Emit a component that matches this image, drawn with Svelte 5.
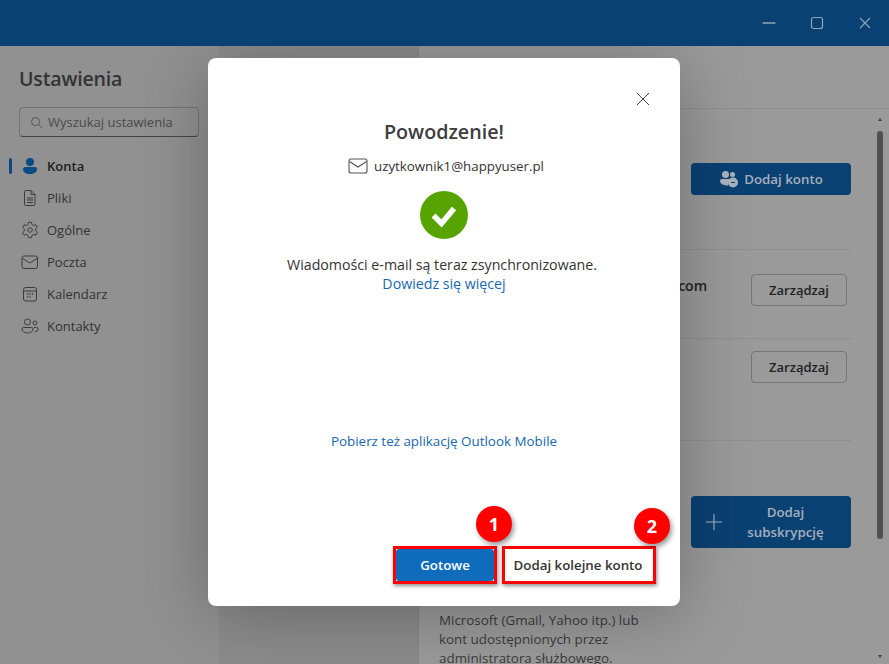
<script lang="ts">
  const navItems = [
    { id: 'konta', label: 'Konta', active: true },
    { id: 'pliki', label: 'Pliki' },
    { id: 'ogolne', label: 'Ogólne' },
    { id: 'poczta', label: 'Poczta' },
    { id: 'kalendarz', label: 'Kalendarz' },
    { id: 'kontakty', label: 'Kontakty' }
  ];
</script>

<div class="window">
  <header class="titlebar">
    <svg width="14" height="2" viewBox="0 0 14 2"><path d="M1 1h12" stroke="#8fa5b9" stroke-width="1.4" stroke-linecap="round" /></svg>
    <svg width="14" height="14" viewBox="0 0 14 14"><rect x="1.5" y="1.5" width="11" height="11" rx="2" fill="none" stroke="#8fa5b9" stroke-width="1.2" /></svg>
    <svg width="14" height="14" viewBox="0 0 14 14"><path d="M2 2l10 10M12 2L2 12" stroke="#8fa5b9" stroke-width="1.1" /></svg>
  </header>

  <div class="body">
    <aside class="sidebar">
      <h1>Ustawienia</h1>
      <div class="search">
        <svg width="13" height="13" viewBox="0 0 13 13" fill="none" stroke="#555" stroke-width="1"><circle cx="5.5" cy="5.5" r="4" /><path d="M8.5 8.5l3.5 3.5" /></svg>
        <span>Wyszukaj ustawienia</span>
      </div>
      <nav>
        {#each navItems as item}
          <div class="nav-item" class:active={item.active}>
            <svg class="nav-icon" width="18" height="18" viewBox="0 0 18 18" fill="none" stroke="#3c3c3c" stroke-width="1">
              {#if item.id === 'konta'}
                <circle cx="9" cy="5" r="4" fill="#0a4a85" stroke="none" />
                <path d="M2 12a2.2 2.2 0 0 1 2.2-2h9.6a2.2 2.2 0 0 1 2.2 2c0 3.4-3 5-7 5s-7-1.6-7-5z" fill="#0a4a85" stroke="none" />
              {:else if item.id === 'pliki'}
                <path d="M4.5 1.5h5.5l4 4v10a1 1 0 0 1-1 1H4.500a1 1 0 0 1-1-1v-13a1 1 0 0 1 1-1z" />
                <path d="M10 1.500v4h4M6 9h6M6 11h6M6 13.500h6" />
              {:else if item.id === 'ogolne'}
                <circle cx="9" cy="9" r="2.300" />
                <path d="M7.500 1.300h3l.5 2.300 1.600.9 2.200-.7 1.500 2.600-1.700 1.600v1.900l1.700 1.600-1.500 2.600-2.200-.7-1.600.9-.5 2.300h-3l-.5-2.300-1.600-.9-2.200.7-1.500-2.600 1.700-1.600V8l-1.700-1.600 1.500-2.600 2.200.7 1.600-.9z" />
              {:else if item.id === 'poczta'}
                <rect x="1" y="3" width="15.500" height="12.500" rx="2" />
                <path d="M1.500 5.500l7.250 4.500 7.250-4.500" />
              {:else if item.id === 'kalendarz'}
                <rect x="2.500" y="2.500" width="13" height="13.500" rx="2" />
                <path d="M2.500 6h13" />
                <path d="M6 9h1.200M8.500 9h1.200M11 9h1.200M6 11.800h1.200M8.500 11.800h1.200" stroke-width="1.300" />
              {:else}
                <circle cx="6.500" cy="5" r="3" />
                <circle cx="14" cy="6" r="2" />
                <path d="M1 12a1.500 1.500 0 0 1 1.500-1.500h8a1.500 1.500 0 0 1 1.500 1.500c0 2.500-2.500 4-5.500 4S1 14.500 1 12z" />
                <path d="M13 10.500h2.500A1.500 1.500 0 0 1 17 12c0 1.500-1.300 2.500-3 2.700" />
              {/if}
            </svg>
            <span>{item.label}</span>
          </div>
        {/each}
      </nav>
    </aside>

    <section class="middle"></section>

    <section class="panel">
      <div class="panel-head"></div>
      <div class="panel-body">
        <div class="panel-col">
          <div class="row row-add">
            <button class="primary add-account">
              <svg width="20" height="18" viewBox="0 0 20 18" fill="#a9b4bf"><circle cx="6.500" cy="4.500" r="3.500" /><circle cx="13.500" cy="4.500" r="2.500" /><path d="M1 11a2 2 0 0 1 2-2h9c-2 1-3 3-2.800 6.500C5 15.500 1 14 1 11z" /><circle cx="14" cy="12.500" r="5" /><path d="M12 12.500h4" stroke="#0a4173" stroke-width="1" /></svg>
              Dodaj konto
            </button>
          </div>
          <div class="row row-mail">
            <strong>com</strong>
            <button class="outline">Zarządzaj</button>
          </div>
          <div class="row row-mail second">
            <button class="outline">Zarządzaj</button>
          </div>
          <div class="row row-sub">
            <button class="primary add-sub">
              <svg width="16" height="16" viewBox="0 0 16 16"><path d="M8 0v16M0 8h16" stroke="#a9b4bf" stroke-width="1.100" /></svg>
              <span>Dodaj subskrypcję</span>
            </button>
          </div>
          <p class="note">Microsoft (Gmail, Yahoo itp.) lub kont udostępnionych przez administratora służbowego.</p>
        </div>
        <div class="scrollbar">
          <i class="arrow up"></i>
          <div class="thumb"></div>
          <i class="arrow down"></i>
        </div>
      </div>
    </section>
  </div>

  <div class="scrim">
    <div class="dialog" role="dialog">
      <button class="close" aria-label="Zamknij">
        <svg width="14" height="14" viewBox="0 0 14 14"><path d="M1 1l12 12M13 1L1 13" stroke="#444" stroke-width="1" /></svg>
      </button>
      <h2>Powodzenie!</h2>
      <div class="account">
        <svg width="20" height="16" viewBox="0 0 20 16" fill="none" stroke="#555" stroke-width="1.100"><rect x="1" y="1" width="18" height="14" rx="2" /><path d="M1.500 3.500L10 9l8.500-5.500" /></svg>
        <span>uzytkownik1@happyuser.pl</span>
      </div>
      <svg class="check" width="48" height="48" viewBox="0 0 48 48">
        <circle cx="24" cy="24" r="24" fill="#57a300" />
        <path d="M13.500 24.500l8 8L34 17.500" fill="none" stroke="#fff" stroke-width="5.500" />
      </svg>
      <p class="synced">Wiadomości e-mail są teraz zsynchronizowane.</p>
      <a class="link" href="#more">Dowiedz się więcej</a>
      <a class="link mobile" href="#mobile">Pobierz też aplikację Outlook Mobile</a>
      <div class="actions">
        <div class="marked">
          <button class="done">Gotowe</button>
          <span class="badge one">1</span>
        </div>
        <div class="marked">
          <button class="another">Dodaj kolejne konto</button>
          <span class="badge two">2</span>
        </div>
      </div>
    </div>
  </div>
</div>

<style>
  :global(body) { margin: 0; overflow: hidden; }
  .window {
    position: relative;
    width: 889px;
    height: 664px;
    overflow: hidden;
    display: flex;
    flex-direction: column;
    background: #999;
    font-family: "Open Sans", "Liberation Sans", sans-serif;
    color: #222;
  }
  .titlebar {
    position: relative;
    z-index: 2;
    height: 46px;
    flex: none;
    background: #0a4173;
    display: flex;
    align-items: center;
    justify-content: flex-end;
    gap: 34px;
    padding-right: 17px;
    box-sizing: border-box;
  }
  .body { flex: 1; display: flex; min-height: 0; }
  .sidebar { width: 219px; flex: none; box-sizing: border-box; padding-top: 19px; background: #919191; }
  .sidebar h1 { margin: 0 0 15px 19px; font-size: 19.600px; line-height: 27px; font-weight: 600; color: #333; letter-spacing: -.2px; }
  .search {
    margin-left: 19px;
    width: 180px;
    height: 30px;
    box-sizing: border-box;
    display: flex;
    align-items: center;
    gap: 5px;
    padding-left: 10px;
    border: 1px solid #757575;
    border-bottom-color: #444;
    border-radius: 4px;
    font-size: 13px;
    color: #4a4a4a;
    white-space: nowrap;
  }
  nav { margin-top: 13px; }
  .nav-item { position: relative; height: 32px; display: flex; align-items: center; gap: 8px; padding-left: 21px; font-size: 13px; color: #333; }
  .nav-item.active { font-weight: 600; color: #1d1d1d; }
  .nav-item.active::before { content: ''; position: absolute; left: 9px; top: 8px; width: 3px; height: 16px; border-radius: 2px; background: #0a4a85; }
  .middle { width: 200px; flex: none; background: #8c8c8c; border-right: 1px solid #868686; box-sizing: border-box; }
  .panel { flex: 1; display: flex; flex-direction: column; background: #9a9a9a; min-width: 0; }
  .panel-head { height: 62px; flex: none; border-bottom: 1px solid #8d8d8d; }
  .panel-body { flex: 1; display: flex; min-height: 0; }
  .panel-col { flex: 1; padding-left: 20px; min-width: 0; }
  .row { display: flex; justify-content: flex-end; border-bottom: 1px solid #8e8e8e; box-sizing: border-box; }
  .row-add { height: 141px; padding-top: 54px; }
  .row-mail { height: 89px; padding-top: 24px; align-items: flex-start; padding-right: 4px; gap: 44px; }
  .row-mail strong { font-size: 14px; font-weight: 600; margin-top: 2px; }
  .row-mail.second { height: 102px; padding-top: 12px; }
  .row-sub { height: 158px; border: 0; padding-top: 55px; }
  button { font-family: inherit; cursor: pointer; }
  .primary { width: 160px; border: 0; border-radius: 4px; background: #0a4173; color: #a5b0bb; font-size: 13.300px; font-weight: 600; display: flex; align-items: center; justify-content: center; padding: 0; }
  .add-account { height: 32px; gap: 5px; }
  .add-sub { height: 52px; padding: 0 20px 0 15px; gap: 18px; line-height: 20px; }
  .add-sub span { flex: 1; text-align: center; }
  .outline { width: 96px; height: 32px; padding: 0; box-sizing: border-box; flex: none; border: 1px solid #777; border-radius: 4px; background: transparent; color: #222; font-size: 13px; font-weight: 600; }
  .note { margin: 12px 0 0; width: 212px; font-size: 13.400px; line-height: 19px; color: #3a3a3a; }
  .scrollbar { width: 14px; margin-left: 22px; margin-right: 2px; flex: none; display: flex; flex-direction: column; align-items: center; }
  .thumb { width: 6px; height: 408px; margin-top: 10px; border-radius: 3px; background: #505050; }
  .arrow { width: 0; height: 0; border-left: 2px solid transparent; border-right: 2px solid transparent; }
  .arrow.up { margin-top: 9px; border-bottom: 3px solid #444; }
  .arrow.down { margin-top: 116px; border-top: 3px solid #444; }

  .scrim { position: absolute; inset: 0; display: flex; justify-content: center; align-items: flex-start; pointer-events: none; }
  .dialog {
    position: relative;
    width: 472px;
    height: 548px;
    margin-top: 58px;
    margin-left: -1px;
    box-sizing: border-box;
    padding-top: 60px;
    background: #fff;
    border-radius: 8px;
    box-shadow: 0 8px 70px rgba(0,0,0,.28);
    display: flex;
    flex-direction: column;
    align-items: center;
    text-align: center;
  }
  .close { position: absolute; right: 30px; top: 34px; width: 14px; height: 14px; border: 0; padding: 0; background: none; display: flex; }
  h2 { margin: 0; font-size: 19.700px; line-height: 28px; font-weight: 600; color: #3d3d3d; }
  .account { margin: 11px 0 0 4px; display: flex; align-items: center; gap: 6px; font-size: 13.300px; line-height: 18px; color: #333; }
  .check { margin-top: 16px; flex: none; }
  .synced { margin: 16px 4px 0 0; font-size: 14.200px; line-height: 20px; color: #333; }
  .link { font-size: 14.200px; line-height: 18px; color: #1667b0; text-decoration: none; }
  .link.mobile { margin-top: 139px; font-size: 13.400px; }
  .actions { position: absolute; right: 24px; bottom: 22px; display: flex; gap: 5px; }
  .marked { position: relative; display: flex; border: 3px solid #f00; box-shadow: 1px 2px 4px rgba(0,0,0,.45); }
  .marked button { height: 32px; font-size: 13.300px; font-weight: 600; padding: 0; border-radius: 3px; }
  .done { width: 98px; border: 0; background: #0f6cbd; color: #fff; }
  .marked .another { width: 148px; border: 0; background: #fff; color: #333; padding-right: 2px; }
  .badge {
    position: absolute;
    width: 36px;
    height: 36px;
    border-radius: 50%;
    background: #f00;
    color: #fff;
    font-size: 18px;
    font-weight: 700;
    line-height: 36px;
    text-align: center;
    box-shadow: 2px 3px 5px rgba(0,0,0,.4);
  }
  .badge.one { top: -43px; left: 80px; }
  .badge.two { top: -41px; right: -17px; }
</style>
